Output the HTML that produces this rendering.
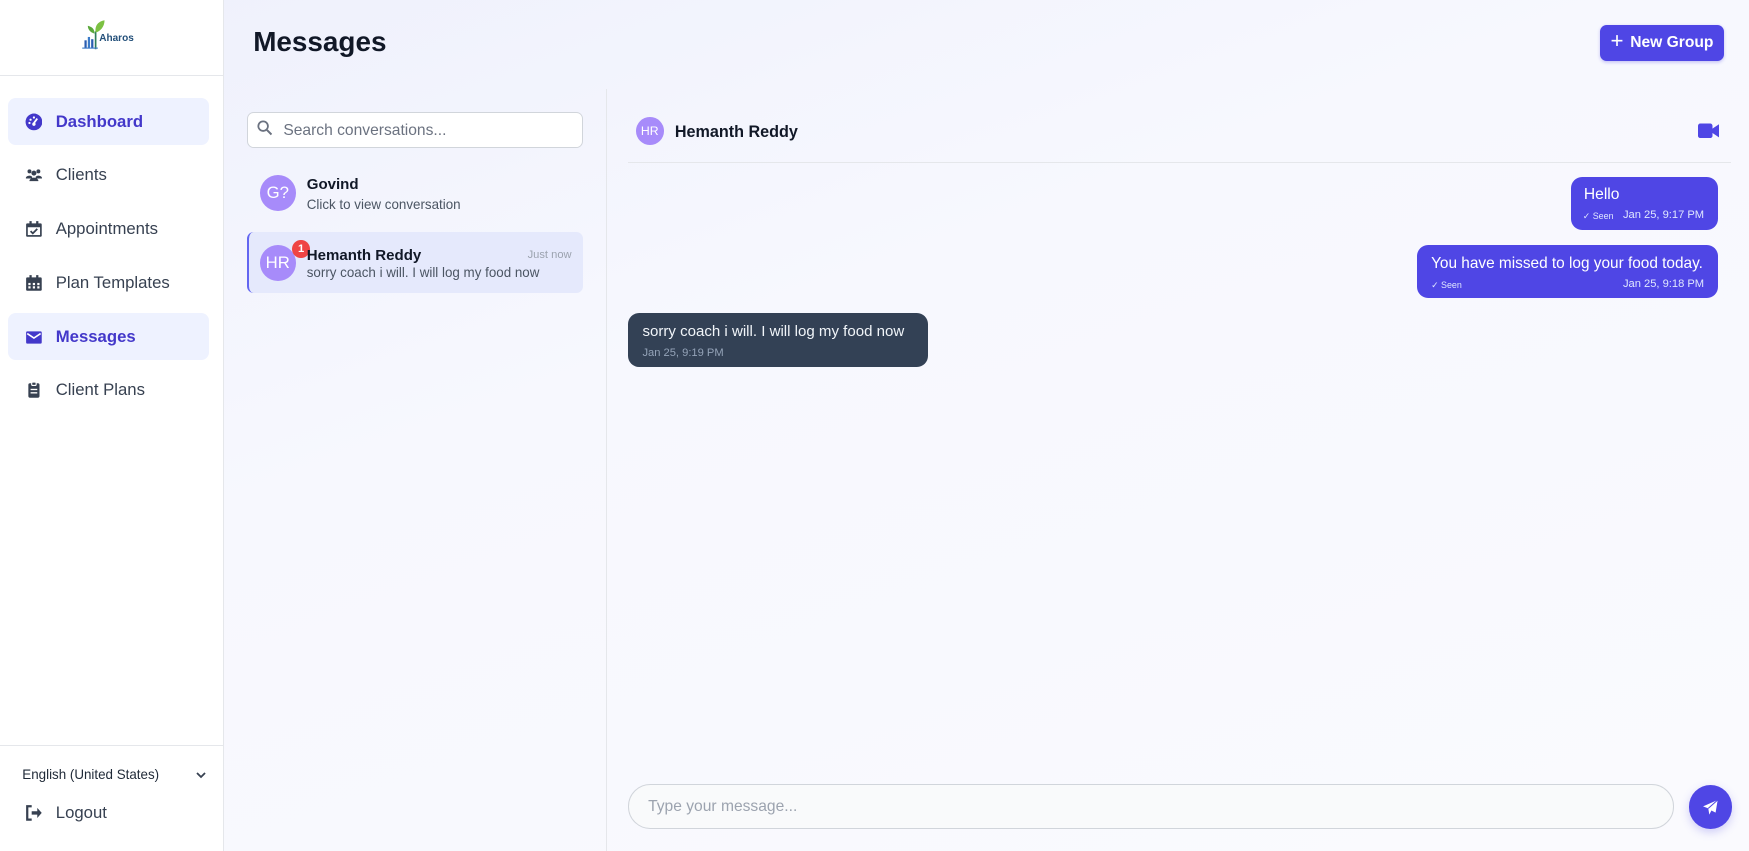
<!DOCTYPE html>
<html><head><meta charset="utf-8"><style>
*{box-sizing:border-box;margin:0;padding:0}
html,body{width:1749px;height:851px;overflow:hidden}
body{font-family:"Liberation Sans",sans-serif;background:#fff}
#r{zoom:1.11543;width:1568px;height:763px;position:relative;background:linear-gradient(160deg,#eef0fc 0%,#f7f8fe 40%,#fafafe 100%);overflow:hidden}
.abs{position:absolute}
#side{left:0;top:0;width:201px;height:763px;background:#fff;border-right:1px solid #e5e7eb}
.nav{position:absolute;left:7px;width:180px;height:42px;border-radius:7px;display:flex;align-items:center;padding-left:15px;font-size:15px;color:#374151}
.nav.act{background:#eef2ff;color:#4338ca;font-weight:bold}
.nav svg{width:16px;height:16px;margin-right:12px}
.t{position:absolute;white-space:nowrap}
.av{position:absolute;border-radius:50%;background:#a78bfa;color:#fff;display:flex;align-items:center;justify-content:center}
.bub{position:absolute;background:#4f46e5;color:#fff;border-radius:10px}
</style></head><body><div id="r">
<div class="abs" id="side">
 <div class="abs" style="left:0;top:67px;width:200px;height:1px;background:#e5e7eb"></div>
 <svg class="abs" style="left:72px;top:16px" width="26" height="30" viewBox="0 0 26 30"><path d="M14 28V12" stroke="#2e7d5b" stroke-width="1.5"/><path d="M14 13C13 6 17 3 22 2 22 8 18 12 14 13z" fill="#7cc142"/><path d="M13 14C9 13 7 10 7 7 11 8 13 10 13 14z" fill="#5aa83a"/><rect x="4" y="20" width="2" height="7" fill="#2a5db0"/><rect x="7" y="17" width="2" height="10" fill="#3a7ac8"/><rect x="10" y="19" width="2" height="8" fill="#2a5db0"/><path d="M2 27h14" stroke="#3a7ac8"/></svg>
 <div class="t" style="left:89px;top:30px;font-size:9px;font-weight:bold;color:#24507a">Aharos</div>
 <div class="nav act" style="top:88px"><svg viewBox="0 0 16 16"><circle cx="8" cy="8" r="7.5" fill="#4338ca"/><path d="M8 9L11 5" stroke="#fff" stroke-width="1.6"/><circle cx="5" cy="6" r="1" fill="#fff"/><circle cx="8" cy="4" r="1" fill="#fff"/><circle cx="4" cy="9" r="1" fill="#fff"/><circle cx="8" cy="10" r="1.5" fill="#fff"/></svg>Dashboard</div>
 <div class="nav" style="top:136px"><svg viewBox="0 0 20 16"><circle cx="5" cy="4" r="2.2" fill="#374151"/><circle cx="15" cy="4" r="2.2" fill="#374151"/><circle cx="10" cy="6" r="2.8" fill="#374151"/><path d="M1 11a4 3 0 0 1 7-1v2H1zM12 10a4 3 0 0 1 7 1v1h-7zM5 15a5 4 0 0 1 10 0z" fill="#374151"/></svg>Clients</div>
 <div class="nav" style="top:184px"><svg viewBox="0 0 16 16"><rect x="1" y="3" width="14" height="12" rx="1" fill="#374151"/><rect x="4" y="1" width="2" height="3" fill="#374151"/><rect x="10" y="1" width="2" height="3" fill="#374151"/><rect x="2.5" y="6.5" width="11" height="7" fill="#fff"/><path d="M5 10l2 2 4-4" stroke="#374151" stroke-width="1.6" fill="none"/></svg>Appointments</div>
 <div class="nav" style="top:233px"><svg viewBox="0 0 16 16"><rect x="1" y="3" width="14" height="12" rx="1" fill="#374151"/><rect x="4" y="1" width="2" height="3" fill="#374151"/><rect x="10" y="1" width="2" height="3" fill="#374151"/><g fill="#fff"><rect x="3" y="8" width="2" height="2"/><rect x="7" y="8" width="2" height="2"/><rect x="11" y="8" width="2" height="2"/><rect x="3" y="11" width="2" height="2"/><rect x="7" y="11" width="2" height="2"/><rect x="11" y="11" width="2" height="2"/></g></svg>Plan Templates</div>
 <div class="nav act" style="top:281px"><svg viewBox="0 0 16 16"><rect x="1" y="3" width="14" height="11" rx="1" fill="#4338ca"/><path d="M2 5l6 4 6-4" stroke="#fff" stroke-width="1.4" fill="none"/></svg>Messages</div>
 <div class="nav" style="top:329px"><svg viewBox="0 0 16 16"><rect x="3" y="2" width="10" height="13" rx="1.5" fill="#374151"/><rect x="6" y="1" width="4" height="3" rx="1" fill="#374151" stroke="#fff"/><g fill="#fff"><rect x="5" y="7" width="6" height="1.2"/><rect x="5" y="10" width="6" height="1.2"/></g></svg>Client Plans</div>
 <div class="abs" style="left:0;top:668px;width:200px;height:1px;background:#e5e7eb"></div>
 <div class="t" style="left:20px;top:688px;font-size:12px;color:#1f2937">English (United States)</div>
 <svg class="abs" style="left:176px;top:690px" width="9" height="9" viewBox="0 0 10 10"><path d="M1 3l4 4 4-4" stroke="#374151" stroke-width="1.8" fill="none"/></svg>
 <svg class="abs" style="left:22px;top:721px" width="16" height="16" viewBox="0 0 16 16"><path d="M6 2H2v12h4" stroke="#374151" stroke-width="2" fill="none"/><path d="M6 6.5h5V3.5L15 8l-4 4.5V9.5H6z" fill="#374151"/></svg>
 <div class="t" style="left:50px;top:720px;font-size:15px;color:#374151">Logout</div>
</div>
<div class="t" style="left:227px;top:23px;font-size:25px;font-weight:bold;color:#111827">Messages</div>
<div class="abs" style="left:1434px;top:22px;width:112px;height:33px;background:#4f46e5;border-radius:6px;color:#fff;font-size:14px;font-weight:bold;display:flex;align-items:center;justify-content:center;box-shadow:0 1px 3px rgba(79,70,229,.3)"><span style="font-size:20px;font-weight:normal;margin-right:6px;margin-top:-3px">+</span>New Group</div>
<div class="abs" style="left:543px;top:80px;width:1px;height:683px;background:#e5e7eb"></div>
<div class="abs" style="left:221px;top:100px;width:302px;height:33px;background:#fff;border:1px solid #d1d5db;border-radius:6px"></div>
<svg class="abs" style="left:230px;top:108px" width="14" height="14" viewBox="0 0 14 14"><circle cx="5.5" cy="5.5" r="4.3" stroke="#6b7280" stroke-width="1.6" fill="none"/><path d="M9 9l4 4" stroke="#6b7280" stroke-width="1.8"/></svg>
<div class="t" style="left:254px;top:109px;font-size:14px;color:#6b7280">Search conversations...</div>
<div class="av" style="left:233px;top:157px;width:32px;height:32px;font-size:15px">G?</div>
<div class="t" style="left:275px;top:158px;font-size:13.5px;font-weight:bold;color:#111827">Govind</div>
<div class="t" style="left:275px;top:177px;font-size:12px;color:#4b5563">Click to view conversation</div>
<div class="abs" style="left:221px;top:208px;width:302px;height:55px;background:#e5e9fc;border-left:2px solid #6366f1;border-radius:6px"></div>
<div class="av" style="left:233px;top:220px;width:32px;height:32px;font-size:15px">HR</div>
<div class="abs" style="left:262px;top:215px;width:16px;height:16px;border-radius:50%;background:#ef4444;color:#fff;font-size:10px;font-weight:bold;display:flex;align-items:center;justify-content:center">1</div>
<div class="t" style="left:275px;top:221px;font-size:13.5px;font-weight:bold;color:#111827">Hemanth Reddy</div>
<div class="t" style="left:473px;top:223px;font-size:10px;color:#9ca3af">Just now</div>
<div class="t" style="left:275px;top:238px;font-size:12px;color:#4b5563">sorry coach i will. I will log my food now</div>
<div class="av" style="left:570px;top:105px;width:25px;height:25px;font-size:11px">HR</div>
<div class="t" style="left:605px;top:110px;font-size:14.5px;font-weight:bold;color:#111827">Hemanth Reddy</div>
<svg class="abs" style="left:1522px;top:110px" width="19" height="14" viewBox="0 0 19 14"><rect x="0" y="0.5" width="13" height="13" rx="2" fill="#4f46e5"/><path d="M13 5l6-4v12l-6-4z" fill="#4f46e5"/></svg>
<div class="abs" style="left:563px;top:145px;width:989px;height:1px;background:#e5e7eb"></div>
<div class="bub" style="left:1408px;top:159px;width:132px;height:47px"><div class="t" style="left:12px;top:8px;font-size:14px">Hello</div><div class="t" style="left:11px;top:30px;font-size:8px;color:#e0e7ff">✓ Seen</div><div class="t" style="left:47px;top:28px;font-size:10px;color:#e0e7ff">Jan 25, 9:17 PM</div></div>
<div class="bub" style="left:1270px;top:220px;width:270px;height:47px"><div class="t" style="left:13px;top:9px;font-size:13.8px">You have missed to log your food today.</div><div class="t" style="left:13px;top:31px;font-size:8px;color:#e0e7ff">✓ Seen</div><div class="t" style="left:185px;top:29px;font-size:10px;color:#e0e7ff">Jan 25, 9:18 PM</div></div>
<div class="bub" style="left:563px;top:281px;width:269px;height:48px;background:#334155"><div class="t" style="left:13px;top:9px;font-size:13.5px;color:#f1f5f9">sorry coach i will. I will log my food now</div><div class="t" style="left:13px;top:30px;font-size:10px;color:#94a3b8">Jan 25, 9:19 PM</div></div>
<div class="abs" style="left:563px;top:703px;width:938px;height:40px;background:#f9fafb;border:1px solid #d1d5db;border-radius:20px"></div>
<div class="t" style="left:581px;top:715px;font-size:14px;color:#9ca3af">Type your message...</div>
<div class="abs" style="left:1514px;top:704px;width:39px;height:39px;border-radius:50%;background:#4f46e5;box-shadow:0 3px 8px rgba(79,70,229,.25)"></div>
<svg class="abs" style="left:1526px;top:716px" width="15" height="15" viewBox="0 0 16 16"><path d="M15 1L1 7l5 2 1 6 2-4 4 2z" fill="#fff"/><path d="M15 1L6 9" stroke="#4f46e5" stroke-width="1"/></svg>
</div></body></html>
